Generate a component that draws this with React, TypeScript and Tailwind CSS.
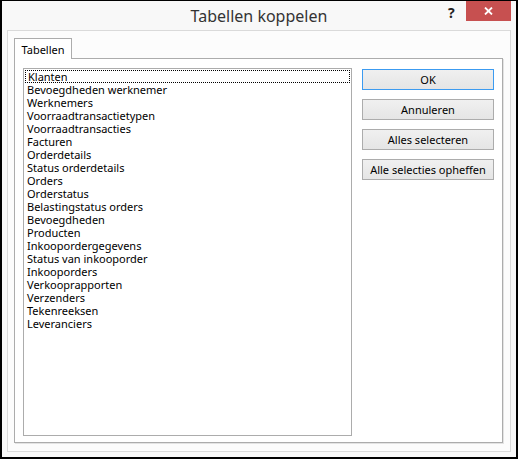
import React from 'react'

const tables = [
  'Klanten',
  'Bevoegdheden werknemer',
  'Werknemers',
  'Voorraadtransactietypen',
  'Voorraadtransacties',
  'Facturen',
  'Orderdetails',
  'Status orderdetails',
  'Orders',
  'Orderstatus',
  'Belastingstatus orders',
  'Bevoegdheden',
  'Producten',
  'Inkoopordergegevens',
  'Status van inkooporder',
  'Inkooporders',
  'Verkooprapporten',
  'Verzenders',
  'Tekenreeksen',
  'Leveranciers',
]

function DialogButton({ label, primary }: { label: string; primary?: boolean }) {
  return (
    <button
      className={`h-[21px] w-[132px] border bg-gradient-to-b from-[#f0f0f0] to-[#e5e5e5] text-[11px] leading-none text-black ${
        primary ? 'border-[#3c9bf0]' : 'border-[#acacac]'
      }`}
    >
      {label}
    </button>
  )
}

export default function App() {
  return (
    <div
      className="flex h-[459px] w-[518px] flex-col border-2 border-t border-black bg-[#f8f8f8]"
      style={{ fontFamily: '"Noto Sans", "Open Sans", sans-serif' }}
    >
      {/* Title bar */}
      <div className="relative flex h-[29px] shrink-0 items-center justify-center">
        <span className="text-[16px] leading-none text-[#333333]">Tabellen koppelen</span>
        <span className="absolute left-[446px] top-[5px] text-[14px] font-bold leading-none text-[#222222]">?</span>
        <div className="absolute right-[5px] top-0 flex h-[20px] w-[45px] items-center justify-center bg-[#c75050]">
          <svg width="9" height="8" viewBox="0 0 9 8">
            <path d="M1 0.5 L8 7.5 M8 0.5 L1 7.5" stroke="#ffffff" strokeWidth="1.8" />
          </svg>
        </div>
      </div>

      {/* Client area */}
      <div className="mx-[5px] mb-[5px] flex flex-1 flex-col border border-[#dadada] bg-[#fcfcfc] pb-[8px] pl-[6px] pr-[7px] pt-[7px]">
        {/* Tab header */}
        <div className="flex">
          <div className="relative z-10 -mb-px flex h-[21px] w-[58px] items-center justify-center border border-b-0 border-[#acacac] bg-white text-[11px] leading-none text-black">
            Tabellen
          </div>
        </div>

        {/* Tab page */}
        <div className="flex flex-1 gap-[10px] border border-[#acacac] bg-white pb-[6px] pl-[8px] pr-[8px] pt-[9px] shadow-[1px_1px_0_#e3e3e3]">
          <div className="flex-1 border border-[#acacac] bg-white p-px">
            {tables.map((name, i) => (
              <div
                key={name}
                className={`flex h-[13px] items-center pl-[2px] text-[11px] leading-[13px] text-black ${
                  i === 0 ? 'border border-dotted border-black pl-[1px]' : ''
                }`}
              >
                <span className="whitespace-nowrap">{name}</span>
              </div>
            ))}
          </div>

          <div className="flex flex-col gap-[9px] pt-px">
            <DialogButton label="OK" primary />
            <DialogButton label="Annuleren" />
            <DialogButton label="Alles selecteren" />
            <DialogButton label="Alle selecties opheffen" />
          </div>
        </div>
      </div>
    </div>
  )
}
